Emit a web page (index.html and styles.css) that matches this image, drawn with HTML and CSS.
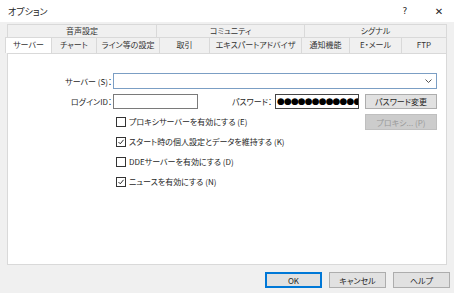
FILE: index.html
```html
<!DOCTYPE html>
<html lang="ja">
<head>
  <meta charset="UTF-8" />
  <title>オプション</title>
  <link rel="stylesheet" href="styles.css">
</head>
<body>
  <div class="titlebar">
    <span class="title">オプション</span>
    <span class="help">?</span>
    <span class="close">✕</span>
  </div>

  <div class="tabs">
    <div class="tab-row top">
      <div class="tab w1">音声設定</div>
      <div class="tab w2">コミュニティ</div>
      <div class="tab w3">シグナル</div>
    </div>
    <div class="tab-row bottom">
      <div class="tab active t1">サーバー</div>
      <div class="tab t2">チャート</div>
      <div class="tab t3">ライン等の設定</div>
      <div class="tab t4">取引</div>
      <div class="tab t5">エキスパートアドバイザ</div>
      <div class="tab t6">通知機能</div>
      <div class="tab t7">E・メール</div>
      <div class="tab t8">FTP</div>
    </div>
  </div>

  <div class="panel">
    <div class="row">
      <label class="lbl">サーバー (S)：</label>
      <div class="combo">
        <svg class="chev" viewBox="0 0 7 4"><path d="M0.5 0.5 L3.5 3.5 L6.5 0.5" /></svg>
      </div>
    </div>
    <div class="row r2">
      <label class="lbl">ログインID：</label>
      <div class="field login"></div>
      <label class="lbl pwlbl">パスワード：</label>
      <div class="field pw"><span class="dots">●●●●●●●●●●●●</span></div>
      <button class="btn pwbtn">パスワード変更</button>
    </div>
    <div class="row r3">
      <ul class="checks">
        <li><span class="box"></span>プロキシサーバーを有効にする (E)</li>
        <li><span class="box on"><svg viewBox="0 0 11 11"><path d="M2 5.5 L4.5 8 L9 2.5" /></svg></span>スタート時の個人設定とデータを維持する (K)</li>
        <li><span class="box"></span>DDEサーバーを有効にする (D)</li>
        <li><span class="box on"><svg viewBox="0 0 11 11"><path d="M2 5.5 L4.5 8 L9 2.5" /></svg></span>ニュースを有効にする (N)</li>
      </ul>
      <button class="btn disabled proxy">プロキシ... (P)</button>
    </div>
  </div>

  <div class="actions">
    <button class="btn default">OK</button>
    <button class="btn">キャンセル</button>
    <button class="btn">ヘルプ</button>
  </div>
</body>
</html>
```

FILE: styles.css
```css
body { margin: 0; width: 454px; height: 293px; background: #f0f0f0; font-family: "Noto Sans CJK JP", "Noto Sans", sans-serif; font-size: 8px; font-feature-settings: "palt"; color: #1e1e1e; overflow: hidden; }
.titlebar { height: 22px; background: #fff; display: flex; align-items: center; padding-left: 8px; font-size: 9px; }
.title { flex: 1; }
.help { width: 34px; text-align: center; font-family: "DejaVu Sans", sans-serif; font-size: 9px; margin-right: 2px; }
.close { width: 30px; text-align: center; font-family: "DejaVu Sans", sans-serif; font-size: 10px; }

.tabs { margin: 2px 0 0 7px; width: 440px; }
.tab-row { display: flex; }
.tab { box-sizing: border-box; text-align: center; border: 1px solid #d9d9d9; border-left: none; background: #f0f0f0; white-space: nowrap; color: #333; }
.tab-row.top .tab { height: 13px; line-height: 11px; border-bottom: none; }
.tab-row.top .tab:first-child { border-left: 1px solid #d9d9d9; }
.tab-row.bottom .tab { height: 16px; line-height: 14px; border-bottom: none; }
.w1 { width: 150px; } .w2 { width: 148px; } .w3 { width: 142px; }
.t1 { width: 45px; } .t2 { width: 45px; } .t3 { width: 63px; } .t4 { width: 50px; }
.t5 { width: 92px; } .t6 { width: 48px; } .t7 { width: 52px; } .t8 { width: 45px; }
.tab.active { background: #fff; border-left: 1px solid #d9d9d9; margin-left: -2px; width: 47px; height: 17px; margin-bottom: -1px; position: relative; z-index: 1; }

.panel { box-sizing: border-box; margin-left: 7px; width: 440px; height: 212px; background: #fff; border: 1px solid #d9d9d9; padding-top: 19px; }
.row { display: flex; align-items: center; }
.lbl { box-sizing: border-box; width: 105px; text-align: right; padding-right: 1px; }
.combo { box-sizing: border-box; width: 324px; height: 16px; border: 1px solid #7b9ec4; position: relative; }
.chev { position: absolute; right: 4px; top: 5px; width: 7px; height: 4px; }
.chev path { fill: none; stroke: #555; stroke-width: 1; }
.r2 { margin-top: 5px; }
.field { box-sizing: border-box; height: 15px; border: 1px solid #7a7a7a; background: #fff; overflow: hidden; }
.login { width: 85px; }
.lbl.pwlbl { width: 77px; padding-right: 3px; }
.pw { width: 84px; border-color: #444; }
.dots { display: block; font-family: "DejaVu Sans", sans-serif; font-size: 9px; line-height: 13px; letter-spacing: -0.9px; white-space: nowrap; padding-left: 1px; color: #000; }
.btn { box-sizing: border-box; font-family: inherit; font-size: 8px; font-feature-settings: "palt"; background: #e1e1e1; border: 1px solid #adadad; color: #1e1e1e; padding: 0; }
.pwbtn { width: 72px; height: 15px; margin-left: 6px; }
.r3 { align-items: flex-start; margin-top: 3px; padding-left: 108px; }
.checks { list-style: none; margin: 0; padding: 0; flex: 1; }
.checks li { height: 20px; line-height: 20px; display: flex; align-items: center; }
.box { box-sizing: border-box; width: 10px; height: 10px; border: 1px solid #333; margin-right: 3px; display: inline-block; }
.box svg { width: 8px; height: 8px; display: block; }
.box svg path { fill: none; stroke: #222; stroke-width: 1.3; }
.proxy { width: 72px; height: 16px; margin-top: 2px; margin-right: 9px; }
.btn.disabled { background: #cccccc; border-color: #bfbfbf; color: #9a9a9a; }

.actions { display: flex; justify-content: flex-end; gap: 7px; margin-top: 7px; padding-right: 4px; }
.actions .btn { width: 57px; height: 16px; }
.btn.default { border: 1px solid #0078d7; box-shadow: inset 0 0 0 1px #0078d7; }
```
